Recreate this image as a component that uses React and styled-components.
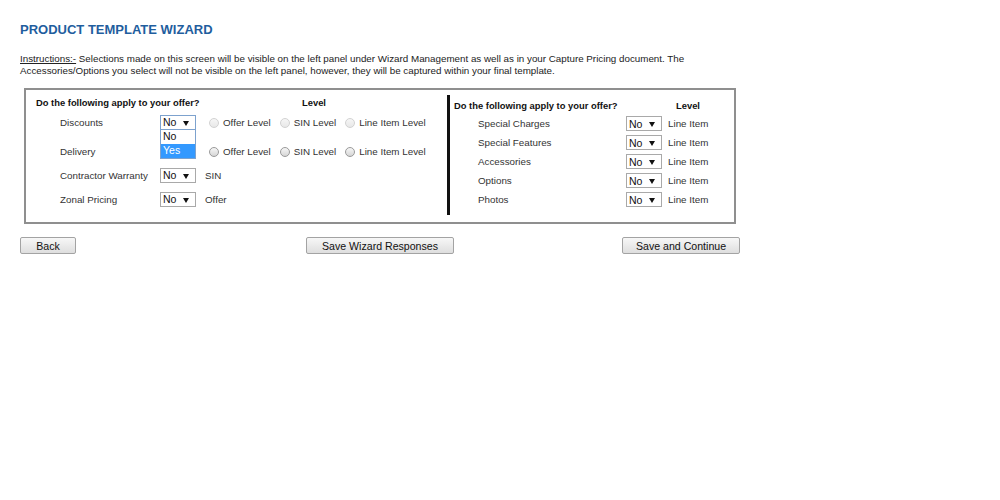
import React from 'react';
import styled, { createGlobalStyle } from 'styled-components';

const GlobalStyle = createGlobalStyle`
  body {
    margin: 0;
    background: #fff;
    font-family: Arial, "Liberation Sans", sans-serif;
  }
`;

const Page = styled.div`
  padding: 22px 20px 0 20px;
  width: 1000px;
  height: 500px;
  box-sizing: border-box;
`;

const Title = styled.h1`
  margin: 0;
  font-size: 13px;
  line-height: 16px;
  font-weight: bold;
  color: #1f5e9e;
`;

const Instructions = styled.p`
  margin: 15px 0 0 0;
  font-size: 9.8px;
  line-height: 12px;
  color: #222;
`;

const Underlined = styled.span`
  text-decoration: underline;
`;

const Box = styled.div`
  margin: 11px 0 0 4px;
  width: 712px;
  height: 136px;
  box-sizing: border-box;
  border: 2px solid #8f8f8f;
  display: flex;
`;

const Panel = styled.div`
  width: ${p => p.$width}px;
  padding: ${p => p.$pad};
  box-sizing: border-box;
`;

const Divider = styled.div`
  width: 3px;
  margin: 5px 0 7px 0;
  background: #111;
`;

const HeadRow = styled.div`
  display: flex;
  align-items: center;
  height: ${p => p.$h}px;
  font-size: 9.4px;
  font-weight: bold;
  color: #111;
`;

const HeadText = styled.span`
  width: ${p => p.$w}px;
`;

const Row = styled.div`
  position: relative;
  display: flex;
  align-items: center;
  height: ${p => p.$h}px;
  margin-top: ${p => p.$gap || 0}px;
  padding-left: 24px;
  font-size: 9.8px;
  color: #333;
`;

const Label = styled.span`
  width: ${p => p.$w}px;
`;

const Select = styled.div`
  position: relative;
  width: 36px;
  height: 15px;
  box-sizing: border-box;
  border: 1px solid ${p => (p.$focus ? '#7da2ce' : '#a9a9a9')};
  background: #fff;
  display: flex;
  align-items: center;
  padding-left: 2px;
  font-size: 10.5px;
  color: #111;
  visibility: ${p => (p.$covered ? 'hidden' : 'visible')};
`;

const Arrow = styled.span`
  position: absolute;
  right: 6px;
  top: 5px;
  width: 0;
  height: 0;
  border-left: 3px solid transparent;
  border-right: 3px solid transparent;
  border-top: 5px solid #111;
`;

const Options = styled.div`
  position: absolute;
  left: -1px;
  top: 13px;
  width: 36px;
  box-sizing: border-box;
  border: 1px solid #7da2ce;
  background: #fff;
  z-index: 2;
`;

const Option = styled.div`
  height: 14px;
  line-height: 13px;
  padding-left: 2px;
  font-size: 10.5px;
  color: ${p => (p.$active ? '#fff' : '#111')};
  background: ${p => (p.$active ? '#3399ff' : '#fff')};
`;

const After = styled.span`
  margin-left: ${p => p.$ml}px;
`;

const Radios = styled.div`
  display: flex;
  align-items: center;
  margin-left: 13px;
  gap: 9px;
`;

const RadioItem = styled.label`
  display: flex;
  align-items: center;
  gap: 4px;
  color: #333;
`;

const Radio = styled.span`
  width: 10px;
  height: 10px;
  box-sizing: border-box;
  border-radius: 50%;
  border: 1px solid ${p => (p.$disabled ? '#d2d2d2' : '#9a9a9a')};
  background: ${p =>
    p.$disabled
      ? 'linear-gradient(#f6f6f6, #e8e8e8)'
      : 'linear-gradient(#f6f6f6, #d6d6d6)'};
  margin-top: 1px;
`;

const ButtonRow = styled.div`
  display: grid;
  grid-template-columns: 286px 316px 118px;
  margin-top: 13px;
`;

const Button = styled.button`
  width: ${p => p.$w}px;
  height: 17px;
  padding: 0;
  font-family: Arial, "Liberation Sans", sans-serif;
  font-size: 10.6px;
  color: #111;
  border: 1px solid #a3a3a3;
  border-radius: 2px;
  background: linear-gradient(#f7f7f7, #dedede);
  cursor: pointer;
`;

const leftRows = [
  { label: 'Discounts', h: 20, gap: 0, radios: true, disabled: true, open: true },
  { label: 'Delivery', h: 20, gap: 9, radios: true, disabled: false, covered: true },
  { label: 'Contractor Warranty', h: 20, gap: 4, level: 'SIN' },
  { label: 'Zonal Pricing', h: 20, gap: 4, level: 'Offer' },
];

const rightRows = ['Special Charges', 'Special Features', 'Accessories', 'Options', 'Photos'];

const radioLevels = ['Offer Level', 'SIN Level', 'Line Item Level'];

// the Delivery select sits under the open Discounts list, so it is hidden
const SelectBox = ({ open, covered }) => (
  <Select $focus={open} $covered={covered}>
    No
    <Arrow />
    {open && (
      <Options>
        <Option>No</Option>
        <Option $active>Yes</Option>
      </Options>
    )}
  </Select>
);

const App = () => {
  return (
    <Page>
      <GlobalStyle />
      <Title>PRODUCT TEMPLATE WIZARD</Title>
      <Instructions>
        <Underlined>Instructions:-</Underlined> Selections made on this screen will be visible on the left panel under Wizard Management as well as in your Capture Pricing document. The
        <br />
        Accessories/Options you select will not be visible on the left panel, however, they will be captured within your final template.
      </Instructions>

      <Box>
        <Panel $width={421} $pad="2px 0 0 10px">
          <HeadRow $h={20}>
            <HeadText $w={266}>Do the following apply to your offer?</HeadText>
            <span>Level</span>
          </HeadRow>
          {leftRows.map(r => (
            <Row key={r.label} $h={r.h} $gap={r.gap}>
              <Label $w={100}>{r.label}</Label>
              <SelectBox open={r.open} covered={r.covered} />
              {r.radios ? (
                <Radios>
                  {radioLevels.map(l => (
                    <RadioItem key={l}>
                      <Radio $disabled={r.disabled} />
                      {l}
                    </RadioItem>
                  ))}
                </Radios>
              ) : (
                <After $ml={9}>{r.level}</After>
              )}
            </Row>
          ))}
        </Panel>

        <Divider />

        <Panel $width={284} $pad="6px 0 0 4px">
          <HeadRow $h={18}>
            <HeadText $w={222}>Do the following apply to your offer?</HeadText>
            <span>Level</span>
          </HeadRow>
          {rightRows.map(label => (
            <Row key={label} $h={19}>
              <Label $w={148}>{label}</Label>
              <SelectBox />
              <After $ml={6}>Line Item</After>
            </Row>
          ))}
        </Panel>
      </Box>

      <ButtonRow>
        <Button $w={56}>Back</Button>
        <Button $w={148}>Save Wizard Responses</Button>
        <Button $w={118}>Save and Continue</Button>
      </ButtonRow>
    </Page>
  );
};

export default App;
